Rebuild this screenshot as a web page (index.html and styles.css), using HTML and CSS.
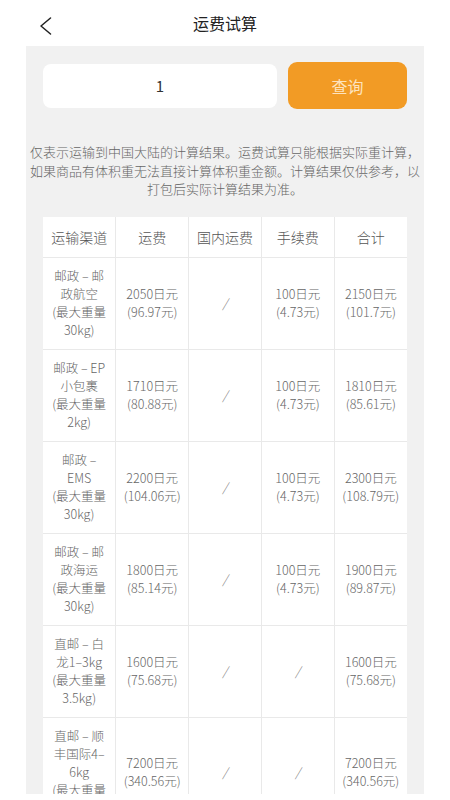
FILE: index.html
```html
<!DOCTYPE html>
<html lang="zh-CN">
<head>
    <meta charset="UTF-8">
    <meta name="viewport" content="width=device-width, initial-scale=1.0">
    <title>运费试算</title>
    <link rel="stylesheet" href="styles.css">
</head>
<body>
    <div class="topbar">
        <a class="back" href="#" title="返回">
            <svg width="12" height="18" viewBox="0 0 12 18">
                <polyline points="10.5,1 1,9 10.5,17" fill="none" stroke="#222" stroke-width="1.5" stroke-linecap="round" stroke-linejoin="round"/>
            </svg>
        </a>
        <h1>运费试算</h1>
    </div>

    <div class="panel">
        <div class="search">
            <input type="text" class="weight-input" value="1">
            <button class="query-btn">查询</button>
        </div>

        <p class="note">仅表示运输到中国大陆的计算结果。运费试算只能根据实际重计算，如果商品有体积重无法直接计算体积重金额。计算结果仅供参考，以打包后实际计算结果为准。</p>

        <table class="fee-table">
            <thead>
                <tr>
                    <th>运输渠道</th>
                    <th>运费</th>
                    <th>国内运费</th>
                    <th>手续费</th>
                    <th>合计</th>
                </tr>
            </thead>
            <tbody>
                <tr>
                    <td class="channel">邮政 – 邮政航空<br>(最大重量30kg)</td>
                    <td>2050日元<br>(96.97元)</td>
                    <td class="none">/</td>
                    <td>100日元<br>(4.73元)</td>
                    <td>2150日元<br>(101.7元)</td>
                </tr>
                <tr>
                    <td class="channel">邮政 – EP小包裹<br>(最大重量2kg)</td>
                    <td>1710日元<br>(80.88元)</td>
                    <td class="none">/</td>
                    <td>100日元<br>(4.73元)</td>
                    <td>1810日元<br>(85.61元)</td>
                </tr>
                <tr>
                    <td class="channel">邮政 – EMS<br>(最大重量30kg)</td>
                    <td>2200日元<br>(104.06元)</td>
                    <td class="none">/</td>
                    <td>100日元<br>(4.73元)</td>
                    <td>2300日元<br>(108.79元)</td>
                </tr>
                <tr>
                    <td class="channel">邮政 – 邮政海运<br>(最大重量30kg)</td>
                    <td>1800日元<br>(85.14元)</td>
                    <td class="none">/</td>
                    <td>100日元<br>(4.73元)</td>
                    <td>1900日元<br>(89.87元)</td>
                </tr>
                <tr>
                    <td class="channel">直邮 – 白龙1–3kg<br>(最大重量3.5kg)</td>
                    <td>1600日元<br>(75.68元)</td>
                    <td class="none">/</td>
                    <td class="none">/</td>
                    <td>1600日元<br>(75.68元)</td>
                </tr>
                <tr>
                    <td class="channel">直邮 – 顺丰国际4–6kg<br>(最大重量6kg)</td>
                    <td>7200日元<br>(340.56元)</td>
                    <td class="none">/</td>
                    <td class="none">/</td>
                    <td>7200日元<br>(340.56元)</td>
                </tr>
            </tbody>
        </table>
    </div>
</body>
</html>
```

FILE: styles.css
```css
body {
    font-family: "Noto Sans CJK SC", "Noto Sans", sans-serif;
    margin: 0;
    padding: 0;
    background-color: #ffffff;
    color: #333;
}
.topbar {
    height: 46px;
    display: flex;
    align-items: center;
    justify-content: center;
    position: relative;
}
.topbar h1 {
    margin: 0;
    font-size: 16px;
    font-weight: normal;
    color: #222;
}
.back {
    position: absolute;
    left: 40px;
    top: 17px;
    display: block;
    line-height: 0;
}
.panel {
    width: 398px;
    height: 748px;
    margin: 0 auto;
    background-color: #f1f1f1;
    padding: 16px 17px 0;
    box-sizing: border-box;
    overflow: hidden;
}
.search {
    display: flex;
    align-items: center;
    gap: 11px;
}
.weight-input {
    flex: 1;
    min-width: 0;
    height: 44px;
    border: none;
    border-radius: 8px;
    background-color: white;
    text-align: center;
    font-family: inherit;
    font-size: 15px;
    color: #333;
    outline: none;
    padding: 0;
}
.query-btn {
    width: 119px;
    height: 47px;
    border: none;
    border-radius: 9px;
    background-color: #f29b25;
    color: #fde3bf;
    font-family: inherit;
    font-size: 16px;
    cursor: pointer;
}
.note {
    margin: 34px -13px 0;
    font-size: 13px;
    font-weight: 300;
    line-height: 18.5px;
    color: #666;
    text-align: justify;
    text-align-last: center;
}
.fee-table {
    width: 100%;
    margin-top: 18px;
    border-collapse: collapse;
    table-layout: fixed;
    background-color: white;
}
.fee-table th,
.fee-table td {
    border: 1px solid #e9e9e9;
    text-align: center;
    vertical-align: middle;
}
.fee-table tr:first-child th {
    border-top: none;
}
.fee-table th:first-child,
.fee-table td:first-child {
    border-left: none;
}
.fee-table th:last-child,
.fee-table td:last-child {
    border-right: none;
}
.fee-table th {
    height: 40px;
    padding: 0;
    font-size: 14px;
    font-weight: 300;
    color: #555;
}
.fee-table td {
    padding: 9.5px 5px;
    font-size: 12.5px;
    font-weight: 300;
    line-height: 18px;
    color: #666;
}
.fee-table td.channel {
    padding: 9.5px 8px;
}
.fee-table td.none {
    font-style: italic;
    color: #777;
}
```
